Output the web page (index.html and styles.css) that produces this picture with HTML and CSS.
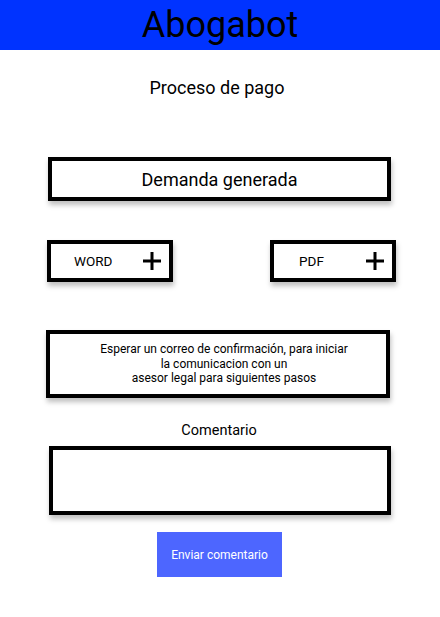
FILE: index.html
```html
<!DOCTYPE html>
<html lang="es">
<head>
<meta charset="utf-8">
<title>Abogabot</title>
<link rel="stylesheet" href="styles.css">
</head>
<body>
<header class="topbar"><h1 class="brand">Abogabot</h1></header>
<main class="page">
  <h2 class="step-title">Proceso de pago</h2>
  <div class="box doc-box">Demanda generada</div>
  <div class="downloads">
    <div class="box dl dl-word"><span class="dl-label">WORD</span>
      <svg class="plus" width="20" height="20" viewBox="0 0 20 20"><path d="M10 1v18M1 10h18" stroke="#000" stroke-width="3"/></svg>
    </div>
    <div class="box dl dl-pdf"><span class="dl-label">PDF</span>
      <svg class="plus" width="20" height="20" viewBox="0 0 20 20"><path d="M10 1v18M1 10h18" stroke="#000" stroke-width="3"/></svg>
    </div>
  </div>
  <div class="box info-box">
    <p>Esperar un correo de confirmación, para iniciar<br>la comunicacion con un<br>asesor legal para siguientes pasos</p>
  </div>
  <div class="comment-label">Comentario</div>
  <div class="box comment-box"></div>
  <button class="send">Enviar comentario</button>
</main>
</body>
</html>
```
FILE: styles.css
```css
* { box-sizing: border-box; }
body { margin: 0; font-family: Roboto, "Liberation Sans", sans-serif; color: #000; background: #fff; }
.topbar { height: 50px; background: #0033ff; display: flex; justify-content: center; align-items: center; }
.brand { margin: 0; font-size: 36px; font-weight: 400; line-height: 50px; }
.page { display: flex; flex-direction: column; }
.step-title { margin: 27px 0 0; font-size: 18px; font-weight: 400; text-align: center; line-height: 22px; padding-right: 6px; }
.box { border: 4px solid #000; background: #fff; box-shadow: 1px 4px 5px rgba(0,0,0,0.25); }
.doc-box { margin: 58px 0 0 48px; width: 343px; height: 44px; display: flex; align-items: center; justify-content: center; font-size: 18px; }
.downloads { display: flex; margin: 39px 0 0 47px; gap: 97px; }
.dl { width: 126px; height: 42px; display: flex; align-items: center; font-size: 13.5px; position: relative; }
.dl-word .dl-label { margin-left: 23px; }
.dl-pdf .dl-label { margin-left: 25px; }
.plus { position: absolute; right: 7px; top: 7px; }
.info-box { margin: 48px 0 0 46px; width: 344px; height: 68px; display: flex; align-items: center; justify-content: center; }
.info-box p { margin: 0 0 0 12px; font-size: 12px; line-height: 14.5px; text-align: center; }
.comment-label { margin-top: 24px; text-align: center; font-size: 14.5px; line-height: 18px; padding-right: 2px; }
.comment-box { margin: 6px 0 0 49px; width: 342px; height: 69px; }
.send { margin: 17px 0 0 157px; width: 125px; height: 45px; border: 0; background: #4d66ff; color: #fff; font-family: Roboto, "Liberation Sans", sans-serif; font-size: 12px; padding: 0; }
```
